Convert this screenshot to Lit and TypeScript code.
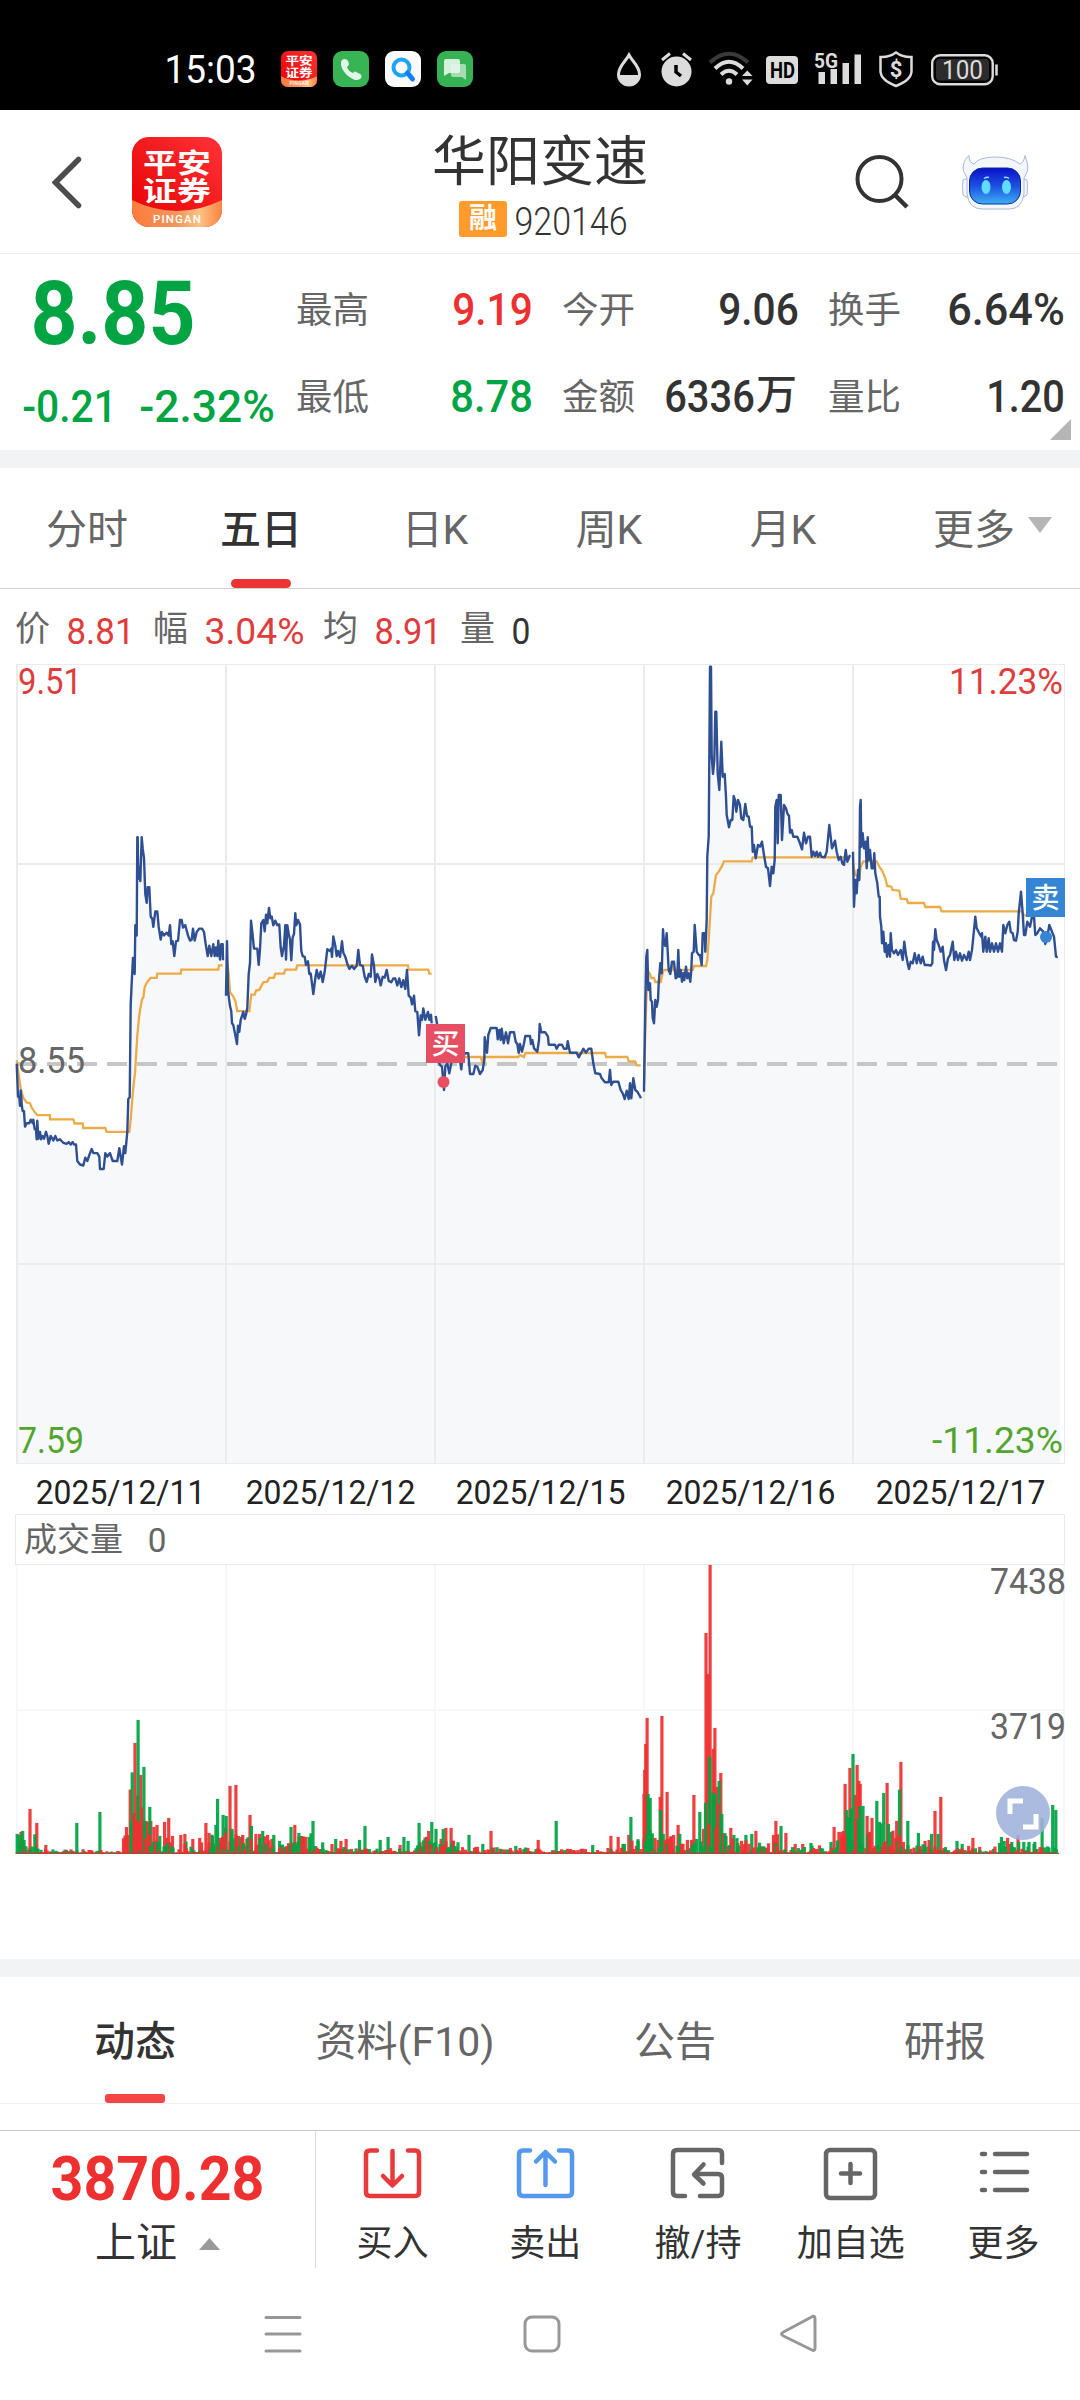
import { LitElement, html, svg, css } from 'lit';
import { customElement, property } from 'lit/decorators.js';
import { classMap } from 'lit/directives/class-map.js';

// Narrow DIN-like figures: the box is exactly cap-height tall, so its bottom is the baseline.
function din(text: string, width: number, cap: number, weight = 500) {
  const size = cap / 0.711;
  return html`<svg class="din" width=${width} height=${cap}>
    ${svg`<text x=${-0.04 * size} y=${cap} font-size=${size} font-weight=${weight}
      textLength=${width + 0.08 * size} lengthAdjust="spacingAndGlyphs">${text}</text>`}
  </svg>`;
}

function axisText(text: string, x: number, y: number, width: number, color: string) {
  return svg`<text x=${x - 1} y=${y} font-size="37.5" font-weight="450" fill=${color}
    textLength=${width + 2} lengthAdjust="spacingAndGlyphs">${text}</text>`;
}

const figures = css`
  .din {
    display: block;
    flex: none;
    overflow: visible;
    fill: currentColor;
    font-family: Roboto, 'Liberation Sans', sans-serif;
  }
`;

type Point = [number, number];

function parse(list: string): Point[] {
  return list.trim().split(/\s+/).map(p => p.split(',').map(Number) as Point);
}

interface Session {
  ox: number;
  oy: number;
  ky: number;
  price: string;
  avg: string;
}

const SESSIONS: Session[] = [
  {
    ox: 0, oy: 660, ky: 2.904,
    price: `50,1172 54,1268 58,1270 60,1295 62,1250 66,1298 68,1310 72,1310 75,1355 80,1345 88,1345 92,1335 98,1345
      100,1335 104,1362 108,1365 110,1392 112,1338 115,1390 120,1370 123,1392 127,1382 132,1390 138,1370 142,1382
      146,1405 152,1382 160,1395 166,1382 172,1395 180,1392 190,1402 200,1405 206,1400 212,1407 218,1400 222,1407
      228,1407 232,1455 240,1465 250,1468 256,1445 262,1455 270,1432 275,1420 280,1432 292,1432 298,1442 300,1478
      311,1478 316,1432 322,1442 330,1432 338,1455 352,1455 358,1418 366,1465 372,1412 376,1432 382,1370 385,1275
      389,1270 392,1000 396,920 399,865 404,912 406,770 410,800 412,515 413,515 415,635 419,600 421,642 425,515
      428,548 432,575 436,680 440,705 443,660 448,660 452,745 457,752 460,775 466,730 472,730 476,775 482,812
      486,790 492,800 500,792 506,800 510,770 514,825 518,817 523,860 528,817 534,815 540,755 545,755 549,777
      556,770 564,800 570,815 575,812 579,780 584,815 590,790 598,780 606,780 612,790 617,825 623,860 628,830
      634,860 640,825 644,860 648,835 652,860 655,815 660,870 664,825 668,825 669,872`,
    avg: `50,1162 54,1190 62,1245 70,1272 80,1285 90,1287 94,1298 102,1310 112,1322 150,1322 150,1334 220,1334
      224,1346 248,1346 250,1359 316,1359 320,1370 388,1370 392,1335 400,1240 405,1200 412,1090 418,1030 426,985
      430,980 434,950 442,935 452,923 470,923 472,911 542,911 544,899 655,899 657,887 668,887`
  },
  {
    ox: 0, oy: 660, ky: 2.904,
    price: `678,975 681,817 684,960 690,1005 694,1020 696,1055 700,1060 704,1080 711,1115 714,1062 718,1080 722,1045
      730,1022 734,1042 738,1030 742,1010 746,912 750,880 753,757 757,790 762,838 772,838 776,885 780,840 784,765
      790,755 794,788 798,740 802,765 807,720 811,750 815,745 820,770 826,757 832,770 838,768 842,835 846,860
      852,830 856,770 858,870 862,770 866,795 870,812 874,872 878,805 882,795 886,735 889,770 894,755 900,768
      904,845 908,860 914,862 918,885 924,875 928,912 932,910 936,940 940,970 946,925 950,900 956,925 962,905
      968,935 974,905 978,872 982,840 990,845 994,838 996,862 1000,803 1006,830 1010,860 1014,845 1020,862
      1026,817 1030,850 1036,862 1042,882 1048,897 1056,888 1062,897 1070,888 1075,842 1080,885 1088,888 1094,920
      1100,935 1106,912 1112,920 1116,855 1122,888 1126,935 1132,912 1138,925 1142,945 1148,920 1154,922 1160,900
      1166,932 1174,936 1180,925 1186,925 1192,945 1198,925 1204,950 1210,930 1216,955 1221,900 1226,975 1232,980
      1236,1000 1242,975 1246,1020 1252,1022 1257,1090 1262,1032 1266,1045 1270,1012 1276,1045 1284,1022 1288,1045
      1293,1030 1295,1055`,
    avg: `680,870 686,910 690,965 698,975 706,990 712,1020 748,1020 754,972 764,972 768,960 778,958 790,936 802,934
      808,923 822,923 826,911 852,911 856,899 888,899 892,887 1224,887 1226,899 1285,899 1288,911 1295,911`
  },
  {
    ox: 400, oy: 900, ky: 3,
    price: `107,348 112,375 114,480 120,495 126,500 132,570 136,500 142,490 148,520 154,490 160,470 170,470 178,470
      184,508 188,470 196,460 205,460 210,522 220,522 226,497 232,500 240,522 248,510 253,480 254,412 261,458
      265,405 272,384 290,384 293,418 298,390 302,420 305,386 311,430 318,397 324,430 330,397 342,397 347,425
      352,432 356,458 360,432 366,455 372,430 376,408 390,408 393,432 397,420 402,445 412,455 417,420 419,372
      424,397 436,397 444,410 446,434 465,434 470,446 476,434 486,434 492,446 500,446 503,424 510,458 530,458
      536,472 544,458 550,446 558,458 566,446 574,446 580,490 586,520 600,522 605,535 615,547 626,547 630,510
      634,555 640,545 655,545 662,570 668,580 674,597 680,572 686,597 690,550 694,595 700,535 706,570 712,575
      718,585 723,595`,
    avg: `117,475 205,471 242,471 246,484 250,471 355,471 360,465 372,471 376,459 615,459 618,471 682,471 686,484
      705,484 710,496 722,496`
  },
  {
    ox: 620, oy: 650, ky: 3,
    price: `72,1325 76,1060 79,920 82,900 85,1020 90,1000 92,1050 96,1055 98,1105 102,1120 106,1050 110,1070 114,1050
      116,1000 121,940 125,970 129,838 132,880 136,888 140,850 146,960 151,972 156,935 162,935 167,985 172,980
      175,900 178,980 182,960 186,995 190,970 193,990 198,950 202,985 206,970 211,995 214,960 216,910 221,905
      224,825 230,905 236,915 240,915 245,945 248,850 254,850 256,905 260,810 262,620 266,560 268,330 270,50
      273,50 275,320 279,372 283,330 286,185 289,185 293,370 298,420 301,350 304,275 308,380 314,372 318,440
      320,495 327,532 332,510 337,510 341,438 345,450 349,485 354,450 360,465 364,505 370,510 376,462 381,498
      386,500 390,530 395,530 398,605 402,585 407,625 414,585 420,590 426,575 432,615 438,650 444,655 450,708
      455,650 460,670 464,630 466,470 470,450 473,580 476,435 482,435 486,570 492,465 498,475 502,490 507,498
      510,548 515,540 520,560 532,560 540,580 546,598 552,548 558,580 564,560 570,560 575,620 580,605 585,618
      590,605 594,620 600,608 604,620 614,622 620,605 628,525 636,595 645,572 650,605 656,630 662,620 667,640
      672,645 677,600 682,635 690,615`,
    avg: `72,1300 76,1145 82,960 90,972 94,984 102,984 106,996 122,996 130,960 155,960 158,948 162,960 218,960
      222,948 258,948 262,930 268,840 274,740 280,730 288,675 296,665 305,650 312,634 395,634 398,622 690,622`
  },
  {
    ox: 620, oy: 650, ky: 3,
    price: `699,605 702,770 706,690 710,730 714,660 718,690 720,470 722,450 724,590 728,550 732,595 737,575 740,655
      743,562 746,630 750,600 755,655 760,655 763,610 766,670 772,700 776,740 779,740 780,800 784,830 786,880
      790,845 794,905 798,880 801,920 806,885 810,920 812,850 816,900 822,910 828,900 834,915 842,900 848,930
      853,875 858,915 864,945 867,957 872,935 878,940 884,910 890,940 896,915 902,940 908,920 914,945 924,945
      932,947 937,940 939,875 942,900 946,838 950,870 956,885 962,905 968,890 972,930 978,960 984,925 990,915
      998,875 1003,930 1008,905 1014,930 1020,910 1026,932 1032,915 1040,930 1046,905 1050,930 1056,900 1062,840
      1066,800 1070,835 1078,850 1084,860 1086,850 1090,905 1096,860 1100,905 1106,865 1110,905 1116,880 1122,905
      1128,880 1134,905 1140,880 1146,905 1150,825 1156,850 1162,825 1168,815 1172,845 1178,850 1182,870 1188,872
      1193,845 1196,790 1203,725 1208,790 1212,855 1216,855 1222,815 1230,830 1236,800 1242,800 1246,855 1252,850
      1260,835 1270,845 1276,882 1282,860 1288,825 1296,845 1302,860 1308,920 1313,922`,
    avg: `699,640 706,675 718,680 722,650 730,634 770,634 778,650 788,665 796,685 802,708 814,710 818,720 838,722
      842,746 860,747 864,759 912,759 916,771 960,771 965,784 1205,784 1212,796 1240,796`
  }
];

function plot(s: Session, list: string): string {
  return parse(list)
    .map(([x, y]) => `${(s.ox + x / 3).toFixed(1)},${(s.oy + y / s.ky).toFixed(1)}`)
    .join(' ');
}

const GRID_X = [17, 226, 435, 644, 853];

@customElement('price-chart')
export class PriceChart extends LitElement {
  static styles = css`
    :host {
      display: block;
      height: 801px;
    }
    svg {
      display: block;
      overflow: visible;
      font-family: Roboto, 'Noto Sans CJK SC', sans-serif;
    }
    .grid {
      stroke: #ebebeb;
      stroke-width: 2;
      fill: none;
    }
    .frame {
      stroke: #ebebeb;
      fill: none;
    }
    .area {
      fill: #f6f8fa;
    }
    .base {
      stroke: #c6c6c6;
      stroke-width: 4;
      stroke-dasharray: 20 10;
    }
    .avg {
      fill: none;
      stroke: #edab47;
      stroke-width: 2.3;
    }
    .price {
      fill: none;
      stroke: #2f4f93;
      stroke-width: 2.4;
      stroke-linejoin: round;
    }
    .mark {
      fill: #fff;
      font-size: 28px;
      font-weight: 500;
      text-anchor: middle;
    }
  `;

  render() {
    const line = SESSIONS.map(s => plot(s, s.price)).join(' ');
    return html`
      <svg width="1080" height="801" viewBox="0 664 1080 801">
        <polygon class="area" points="17,1464 ${line} 1060,957 1060,1464"></polygon>
        <rect class="frame" x="16.5" y="664.5" width="1048" height="799"></rect>
        ${GRID_X.map(x => svg`<line class="grid" x1=${x} x2=${x} y1="664" y2="1464"></line>`)}
        <path class="grid" d="M16 864h1048M16 1264h1048"></path>
        <line class="base" x1="17" x2="1058" y1="1064" y2="1064"></line>
        ${SESSIONS.map(s => svg`
          <polyline class="avg" points=${plot(s, s.avg)}></polyline>
          <polyline class="price" points=${plot(s, s.price)}></polyline>`)}
        ${axisText('9.51', 19, 694, 62, '#e03c3c')}
        ${axisText('8.55', 19, 1073, 65, '#666')}
        ${axisText('7.59', 19, 1453, 64, '#54a52f')}
        ${axisText('11.23%', 950, 694, 112, '#e03c3c')}
        ${axisText('-11.23%', 933, 1453, 129, '#54a52f')}
        <rect x="426" y="1024" width="39" height="39" fill="#e64e63"></rect>
        <text class="mark" x="445.5" y="1054">买</text>
        <circle cx="443.5" cy="1082" r="6" fill="#e64e63"></circle>
        <rect x="1026" y="878" width="39" height="39" fill="#3485d3"></rect>
        <text class="mark" x="1045.5" y="908">卖</text>
        <circle cx="1046" cy="937" r="6" fill="#3485d3"></circle>
      </svg>
    `;
  }
}

const SELL_LEFT = `50,1242 56,1245 66,1233 70,1260 223,1209 290,1176 101,1243 384,1057 401,900 418,1041 435,1161
  464,1248 540,1265 627,1215 632,1137 648,1185 657,1188 674,1227 730,1218 763,1233 795,1245 812,1263 845,1221
  868,1239 876,1248 880,1251 898,1251 903,1240 909,1203 937,1267 975,1257 1044,1260 1060,1218 1104,1260 1127,1251
  1173,1251 1185,1263 1217,1209 1254,1206 1266,1227 1287,1227 1314,1263 1330,1267 1362,1245 1402,1272 1498,1278`;
const BUY_LEFT = `61,1236 87,1167 107,1209 133,1275 378,1109 392,969 409,1065 400,1127 388,1180 424,1203 430,1206
  438,1203 447,1221 456,1215 478,1206 490,1194 484,1254 501,1248 525,1245 537,1242 560,1257 580,1254 598,1209
  607,1239 617,1248 638,1254 655,1224 668,1098 685,1095 692,1248 705,1245 717,1257 726,1185 743,1242 754,1242
  768,1249 777,1245 790,1257 856,1215 865,1266 888,1251 964,1272 990,1263 1005,1257 1162,1275 1220,1267 1235,1272
  1245,1233 1295,1224 1310,1224 1281,1257 1382,1281 1426,1233 1510,1284 1533,1284 1563,1260`;
const SELL_RIGHT = `47,1203 153,1275 241,1272 264,1191 285,1263 314,1122 320,1134 350,1170 326,1240 358,1242 406,1242
  464,1176 493,1011 520,1083 528,1182 516,1194 540,1248 563,1245 598,1245 615,1242 700,1218 787,1269 845,1266
  891,1170 909,1002 938,1158 978,1143 986,1206 991,1210 998,1119 1012,1212 1020,1236 1044,1109 1068,1203 1099,1239
  1137,1242 1156,1242 1211,1263 1226,1272 1340,1251 1348,1263 1370,1266 1390,1266 1405,1266 1420,1266 1437,1266
  1458,1194 1489,1155 1498,1170`;
const BUY_RIGHT = `206,1248 227,1251 258,1245 302,1122 304,1050 307,972 311,894 349,1131 354,888 369,1116 334,1254
  343,1260 380,1251 388,1245 401,1215 428,1260 440,1260 447,1125 475,1227 482,639 488,762 494,435 503,987 508,924
  514,1101 525,1059 554,1224 574,1269 627,1233 678,1245 685,1203 690,1243 714,1239 741,1272 763,1272 854,1221
  868,1236 876,1236 886,1092 900,1044 915,1125 921,1035 926,1083 930,1092 950,1188 957,1236 964,1194 1008,1089
  1036,1203 1048,1026 1033,1254 1118,1263 1130,1260 1147,1173 1164,1131 1245,1278 1257,1254 1277,1281 1358,1254
  1388,1245`;

// Upper bound of the quiet minutes' bars along the time axis.
const ENVELOPE = parse(`16,16 27,9 40,4 118,3 128,30 137,60 145,36 160,16 175,9 200,9 215,22 235,22 260,16 285,9
  300,18 313,16 320,6 400,5 425,16 445,16 470,6 600,4 625,10 640,16 648,28 655,14 660,20 672,20 685,8 700,16
  706,70 716,70 724,26 735,18 750,12 770,12 776,16 790,6 830,9 845,26 855,60 862,44 870,22 885,36 895,20 910,12
  950,6 990,4 1000,10 1010,10 1040,9 1058,4`);

function envelope(x: number): number {
  for (let i = 1; i < ENVELOPE.length; i++) {
    const [x1, h1] = ENVELOPE[i];
    if (x <= x1) {
      const [x0, h0] = ENVELOPE[i - 1];
      return h0 + ((h1 - h0) * (x - x0)) / (x1 - x0);
    }
  }
  return 3;
}

interface Bar {
  x: number;
  h: number;
  up: boolean;
}

function volumeBars(): Bar[] {
  const bars: Bar[] = [];
  const add = (list: string, ox: number, up: boolean) =>
    parse(list).forEach(([x, top]) => bars.push({ x: ox + x / 2.904, h: (1301 - top) / 3, up }));
  add(BUY_LEFT, 0, true);
  add(BUY_RIGHT, 540, true);
  add(SELL_LEFT, 0, false);
  add(SELL_RIGHT, 540, false);
  let seed = 7;
  for (let x = 17; x < 1058; x += 1.5) {
    seed = (seed * 16807) % 2147483647;
    const r = seed / 2147483647;
    seed = (seed * 16807) % 2147483647;
    bars.push({ x, h: 1 + envelope(x) * r * r, up: seed % 100 < 54 });
  }
  return bars;
}

@customElement('volume-chart')
export class VolumeChart extends LitElement {
  static styles = [figures, css`
    :host {
      display: block;
      position: relative;
      height: 445px;
    }
    .head {
      box-sizing: border-box;
      display: flex;
      align-items: center;
      gap: 26px;
      height: 51px;
      margin: 0 15px;
      padding-left: 8px;
      border: 1px solid #e9e9e9;
      color: #666;
      font-size: 33px;
      line-height: 1;
    }
    .plot {
      display: block;
      overflow: visible;
      font-family: Roboto, sans-serif;
    }
    .grid {
      stroke: #f7f7f7;
      stroke-width: 2;
      fill: none;
    }
    .up {
      fill: #ee3030;
    }
    .down {
      fill: #00a443;
    }
    .bar {
      opacity: 0.93;
    }
    .expand {
      position: absolute;
      left: 996px;
      top: 272px;
    }
  `];

  render() {
    return html`
      <div class="head"><span>成交量</span>${din('0', 16, 24, 400)}</div>
      <svg class="plot" width="1080" height="290" viewBox="0 1565 1080 290">
        ${[...GRID_X, 1064].map(x => svg`<line class="grid" x1=${x} x2=${x} y1="1565" y2="1853"></line>`)}
        <path class="grid" d="M16 1710h1048"></path>
        ${volumeBars().map(b => svg`<rect class="bar ${b.up ? 'up' : 'down'}" x=${(b.x - 1.6).toFixed(1)}
          y=${(1853.6 - b.h).toFixed(1)} width="3.2" height=${b.h.toFixed(1)}></rect>`)}
        <path d="M16 1853.4H1059" stroke="#c23b33" stroke-width="1"></path>
        ${axisText('7438', 991, 1594, 74, '#666')}
        ${axisText('3719', 991, 1739, 74, '#666')}
      </svg>
      <svg class="expand" width="54" height="54" viewBox="0 0 54 54">
        <circle cx="27" cy="27" r="27" fill="#9fb0db" opacity=".88"></circle>
        <path d="M14 28V15h13M40 28v13H27" fill="none" stroke="#fff" stroke-width="5"></path>
      </svg>
    `;
  }
}

@customElement('app-logo')
export class AppLogo extends LitElement {
  @property({ type: Number }) size = 90;

  static styles = css`
    :host {
      display: block;
      flex: none;
    }
    svg {
      display: block;
      font-family: 'Noto Sans CJK SC', sans-serif;
    }
  `;

  render() {
    return html`
      <svg width=${this.size} height=${this.size} viewBox="0 0 90 90">
        <defs>
          <clipPath id="tile"><rect width="90" height="90" rx="17"></rect></clipPath>
          <linearGradient id="red" x1="0" y1="1" x2="1" y2="0">
            <stop offset="0" stop-color="#e60000"></stop><stop offset="1" stop-color="#ff3237"></stop>
          </linearGradient>
          <linearGradient id="gold">
            <stop offset="0" stop-color="#ff7a3c"></stop><stop offset=".5" stop-color="#f0975c"></stop>
            <stop offset=".75" stop-color="#ffc184"></stop><stop offset="1" stop-color="#ff8440"></stop>
          </linearGradient>
        </defs>
        <g clip-path="url(#tile)">
          <rect width="90" height="90" fill="url(#red)"></rect>
          <path d="M0 63Q45 85 90 63V90H0z" fill="url(#gold)"></path>
        </g>
        <g fill="#fff" font-weight="700" text-anchor="middle">
          <text transform="translate(45 35.500) scale(1 .8)" font-size="34">平安</text>
          <text transform="translate(45 64) scale(1 .8)" font-size="34">证券</text>
          <text x="45" y="86" font-size="11.5" font-weight="500" textLength="48"
            font-family="Roboto">PINGAN</text>
        </g>
      </svg>
    `;
  }
}

@customElement('status-bar')
export class StatusBar extends LitElement {
  static styles = [figures, css`
    :host {
      box-sizing: border-box;
      display: flex;
      align-items: center;
      justify-content: space-between;
      height: 110px;
      padding: 28px 82px 0 166px;
      background: #000;
      color: #fff;
    }
    .apps, .state {
      display: flex;
      align-items: center;
    }
    .apps {
      gap: 16px;
    }
    .apps .din {
      margin-right: 10px;
    }
    .state {
      gap: 17px;
    }
    .state svg {
      display: block;
      overflow: visible;
      color: #dcdcdc;
    }
    svg {
      font-family: Roboto, sans-serif;
    }
  `];

  render() {
    return html`
      <div class="apps">
        ${din('15:03', 89, 27, 450)}
        <app-logo .size=${36}></app-logo>
        <svg width="36" height="36">
          <rect width="36" height="36" rx="9" fill="#37b555"></rect>
          <path d="M9 9c2-2 5-1 6 1l1 3c0 1-1 2-2 3 1 3 3 5 6 6 1-1 2-2 3-1l4 2c2 1 2 4 0 5-3 2-6 1-9-1-5-3-9-8-10-13
            0-2 0-4 1-5z" fill="#e2f5e6"></path>
        </svg>
        <svg width="36" height="36">
          <rect width="36" height="36" rx="9" fill="#fafafa"></rect>
          <circle cx="16.5" cy="16.5" r="8" fill="none" stroke="#1ea4f4" stroke-width="4"></circle>
          <path d="M22.5 22l5 6" stroke="#127ef0" stroke-width="5" stroke-linecap="round"></path>
        </svg>
        <svg width="36" height="36">
          <rect width="36" height="36" rx="9" fill="#35b253"></rect>
          <path d="M14 13h13q2 0 2 2v14l-4-3H16q-2 0-2-2z" fill="#a6dcb2"></path>
          <path d="M9 8h12q2 0 2 2v10q0 2-2 2H12l-5 3V10q0-2 2-2z" fill="#e4f5e8" opacity=".92"></path>
        </svg>
      </div>
      <div class="state">
        <svg width="27" height="36">
          <path d="M12 4C9 10 1.500 15 1.500 23.500a10.500 10.500 0 0 0 21 0C22.500 15 15 10 12 4z" fill="none"
            stroke="currentColor" stroke-width="3"></path>
          <path d="M2 24h20q-1 10-10 10T2 24z" fill="currentColor"></path>
        </svg>
        <svg width="31" height="36">
          <circle cx="15.500" cy="20.500" r="15" fill="currentColor"></circle>
          <path d="M1 9l8-6.500M30 9l-8-6.500" stroke="currentColor" stroke-width="3"></path>
          <path d="M15 14v7l5 4" fill="none" stroke="#000" stroke-width="3.500"></path>
        </svg>
        <svg width="40" height="36" fill="none" stroke-width="4">
          <path d="M1 11.500Q20-6 39 11.500" stroke="#3a3a3a"></path>
          <path d="M6 17.500Q20 4 34 17.500M12 23.500Q20 16 28 23.500" stroke="currentColor"></path>
          <circle cx="20" cy="30.500" r="3.200" fill="currentColor"></circle>
          <path d="M33 25h10.500l-5.200-5.500zM33 28.500h10.500l-5.200 6z" fill="currentColor"></path>
        </svg>
        <svg width="32" height="36">
          <rect y="5" width="32" height="28" rx="4" fill="currentColor"></rect>
          <text x="4" y="27" font-size="22.500" font-weight="700" fill="#000" textLength="25"
            lengthAdjust="spacingAndGlyphs">HD</text>
        </svg>
        <svg width="47" height="36" fill="currentColor">
          <text x="-1" y="16.500" font-size="21" font-weight="700" textLength="24"
            lengthAdjust="spacingAndGlyphs">5G</text>
          <path d="M3.500 21h6.500v12H3.500zM15.500 18H22v15h-6.500zM27.500 12H34v21h-6.500zM39.500 3.500H46V33h-6.500z"></path>
        </svg>
        <svg width="35" height="36">
          <path d="M17 1.500q7 5 15.500 4.500v14q0 9-15.500 15Q1.500 29 1.500 20V6Q10 6.500 17 1.500z" fill="none"
            stroke="currentColor" stroke-width="2.500"></path>
          <text x="17" y="25.500" font-size="22" font-weight="700" fill="currentColor" text-anchor="middle">$</text>
        </svg>
        <svg width="67" height="36">
          <rect x="1.200" y="4.200" width="60.500" height="29" rx="8" fill="none" stroke="currentColor"
            stroke-width="2.400"></rect>
          <rect x="5" y="8" width="53" height="21.500" rx="4" fill="#2c2c2c"></rect>
          <path d="M65.500 13.500v11" stroke="currentColor" stroke-width="2.500"></path>
          <text x="11" y="27.500" font-size="25.500" font-weight="400" fill="currentColor" textLength="41"
            lengthAdjust="spacingAndGlyphs">100</text>
        </svg>
      </div>
    `;
  }
}

@customElement('stock-header')
export class StockHeader extends LitElement {
  static styles = [figures, css`
    :host {
      box-sizing: border-box;
      display: grid;
      grid-template-columns: 52px 80px 300px 217px 1fr;
      height: 144px;
      border-bottom: 1px solid #ebebeb;
      color: #333;
    }
    .back {
      grid-column: 2;
      margin-top: 46px;
    }
    app-logo {
      margin-top: 27px;
    }
    .title {
      font-size: 54px;
      line-height: 54px;
      margin-top: 26px;
      white-space: nowrap;
    }
    .code {
      display: flex;
      align-items: center;
      gap: 9px;
      margin: 11px 0 0 27px;
    }
    .margin {
      width: 48px;
      height: 36px;
      border-radius: 3px;
      background: #ff9b2b;
      color: #fff;
      font-size: 28px;
      font-weight: 700;
      line-height: 36px;
      text-align: center;
    }
    .code .din {
      margin-top: 5px;
    }
    .tools {
      display: flex;
      gap: 53px;
      padding: 44px 0 0 206px;
    }
  `];

  render() {
    return html`
      <svg class="back" width="32" height="54">
        <path d="M26.500 3.500L3.500 26.500l23 23" fill="none" stroke="#4c4c4c" stroke-width="5.500" stroke-linecap="round"></path>
      </svg>
      <app-logo></app-logo>
      <div>
        <div class="title">华阳变速</div>
        <div class="code"><span class="margin">融</span>${din('920146', 110, 27, 350)}</div>
      </div>
      <div class="tools">
        <svg width="54" height="56">
          <circle cx="24.500" cy="25" r="22" fill="none" stroke="#333" stroke-width="4"></circle>
          <path d="M40 41l12 12" stroke="#333" stroke-width="4.500"></path>
        </svg>
        <svg width="68" height="56" viewBox="0 0 68 56">
          <defs>
            <linearGradient id="visor" x2="0" y2="1">
              <stop offset="0" stop-color="#0a10c8"></stop><stop offset=".5" stop-color="#1d50e0"></stop>
              <stop offset="1" stop-color="#3cb0f4"></stop>
            </linearGradient>
          </defs>
          <g fill="#f3f6fb" stroke="#a9bad2" stroke-width="1">
            <path d="M1 26q-1 6 0 15l5 3V24zM65 26q1 6 0 15l-5 3V24z"></path>
            <path d="M7 1.500C2 5-1 15 3 20q3 4 2 8v12q2 15 15 15h27q13 0 15-15V28q-1-4 2-8 4-5-1-18.500
              -1 7-5 8.500Q49 3 33 3T12 10Q7 9 7 1.500z"></path>
          </g>
          <rect x="7.500" y="14" width="51" height="36" rx="13" fill="url(#visor)" stroke="#0b2a9c"></rect>
          <ellipse cx="24" cy="33" rx="4.500" ry="7" fill="#5fdcff"></ellipse>
          <ellipse cx="44.500" cy="33" rx="4.500" ry="7" fill="#5fdcff"></ellipse>
          <path d="M22 24.500q3-2 5-1M42 23.500q3-1 5 1" fill="none" stroke="#9fd8ff" stroke-width="1.500"></path>
        </svg>
      </div>
    `;
  }
}

interface Quote {
  label: string;
  value: string;
  width: number;
  tone?: string;
  unit?: string;
}

const QUOTES: Quote[] = [
  { label: '最高', value: '9.19', width: 77, tone: 'red' },
  { label: '今开', value: '9.06', width: 77 },
  { label: '换手', value: '6.64%', width: 114 },
  { label: '最低', value: '8.78', width: 79, tone: 'green' },
  { label: '金额', value: '6336', width: 87, unit: '万' },
  { label: '量比', value: '1.20', width: 75 }
];

@customElement('quote-panel')
export class QuotePanel extends LitElement {
  static styles = [figures, css`
    :host {
      box-sizing: border-box;
      display: flex;
      position: relative;
      height: 196px;
    }
    .red {
      color: #ee3030;
    }
    .green {
      color: #00a443;
    }
    .last {
      box-sizing: border-box;
      width: 296px;
      padding: 27px 0 0 24px;
    }
    .last > .din {
      margin-left: 10px;
    }
    .change {
      display: flex;
      gap: 26px;
      margin-top: 46px;
    }
    .items {
      display: grid;
      grid-template-columns: repeat(3, 235px);
      grid-auto-rows: 87px;
      column-gap: 31px;
      padding-top: 11px;
    }
    .item {
      display: flex;
      align-items: center;
      justify-content: space-between;
      color: #333;
    }
    .label {
      padding-top: 5px;
      color: #666;
      font-size: 36.500px;
      line-height: 1;
    }
    .value {
      display: flex;
      align-items: center;
      gap: 3px;
    }
    .value.red, .value.green {
      color: #ee3030;
    }
    .value.green {
      color: #00a443;
    }
    .unit {
      font-size: 41px;
      font-weight: 500;
      line-height: 1;
    }
    .corner {
      position: absolute;
      right: 9px;
      bottom: 10px;
    }
  `];

  render() {
    return html`
      <div class="last green">
        ${din('8.85', 158, 63, 700)}
        <div class="change">${din('-0.21', 91, 32)}${din('-2.32%', 132, 32)}</div>
      </div>
      <div class="items">
        ${QUOTES.map(q => html`
          <div class="item">
            <span class="label">${q.label}</span>
            <span class="value ${q.tone ?? ''}">
              ${din(q.value, q.width, 32)}${q.unit ? html`<span class="unit">${q.unit}</span>` : ''}
            </span>
          </div>
        `)}
      </div>
      <svg class="corner" width="21" height="21"><path d="M21 0v21H0z" fill="#b5b5b5"></path></svg>
    `;
  }
}

const PERIODS = ['分时', '五日', '日K', '周K', '月K'];
const DATES = ['2025/12/11', '2025/12/12', '2025/12/15', '2025/12/16', '2025/12/17'];
const SECTIONS = ['动态', '资料(F10)', '公告', '研报'];

const ACTIONS = [
  {
    label: '买入', color: '#e83a3a',
    icon: svg`<path d="M16 5.500H9q-4 0-4 4V47q0 4 4 4h45q4 0 4-4V9.500q0-4-4-4h-7M31.500 6v34M22 31l9.500 9.500L41 31"></path>`
  },
  {
    label: '卖出', color: '#5499ee',
    icon: svg`<path d="M16 5.500H9q-4 0-4 4V47q0 4 4 4h45q4 0 4-4V9.500q0-4-4-4h-9M31.500 40V7M22 16.500L31.500 7l9.500 9.500"></path>`
  },
  {
    label: '撤/持', color: '#666',
    icon: svg`<path d="M19 51H11q-4 0-4-4V9q0-4 4-4h41q4 0 4 4v9M34 51h18q4 0 4-4V33q0-4-4-4H29M37.500 19.500L28 29.500l9.500 9"></path>`
  },
  {
    label: '加自选', color: '#666',
    icon: svg`<rect x="7" y="5" width="49" height="48" rx="4"></rect><path d="M31.500 19v19M22 28.500h19"></path>`
  },
  {
    label: '更多', color: '#666',
    icon: svg`<path d="M10 9h3M10 27h3M10 45h3M23 9h32M23 27h32M23 45h32"></path>`
  }
];

@customElement('app-root')
export class AppRoot extends LitElement {
  static styles = [figures, css`
    :host {
      display: flex;
      flex-direction: column;
      width: 1080px;
      height: 2400px;
      overflow: hidden;
      background: #fff;
      color: #333;
      font-family: Roboto, 'Noto Sans CJK SC', sans-serif;
    }
    .band {
      height: 18px;
      flex: none;
      background: #f2f3f5;
    }
    .tabs {
      box-sizing: border-box;
      flex: none;
      display: flex;
      color: #666;
      font-size: 41px;
      line-height: 1;
    }
    .tab {
      display: flex;
      flex-direction: column;
      align-items: center;
      justify-content: space-between;
    }
    .tab.active {
      color: #333;
      font-weight: 500;
    }
    .tab.active::after {
      content: '';
      width: 60px;
      height: 9px;
      border-radius: 5px;
      background: #eb3434;
    }
    .periods {
      height: 121px;
      border-bottom: 1px solid #d2d2d2;
    }
    .periods .tab {
      width: 174px;
      padding-top: 42px;
    }
    .more {
      display: flex;
      gap: 13px;
      padding: 42px 0 0 63px;
    }
    .more svg {
      margin-top: 7px;
    }
    .cursor {
      flex: none;
      display: flex;
      align-items: center;
      height: 75px;
      padding: 5px 15px 0;
      box-sizing: border-box;
      color: #666;
      font-size: 35px;
      line-height: 1;
    }
    .cursor span {
      margin-right: 18px;
    }
    .cursor .din {
      color: #e03c3c;
      margin: 3px 20px 0 0;
    }
    .cursor .din:last-child {
      color: #333;
    }
    .dates {
      flex: none;
      display: flex;
      gap: 43px;
      height: 34px;
      padding: 15px 0 0 37px;
      color: #222;
    }
    .sections {
      height: 127px;
      margin-bottom: 26px;
      border-bottom: 1px solid #f0f0f0;
    }
    .sections .tab {
      width: 270px;
      padding-top: 45px;
    }
    .sections .tab.active::after {
      border-radius: 3px;
      background: #f54545;
    }
    .toolbar {
      box-sizing: border-box;
      flex: none;
      display: flex;
      height: 138px;
      border-top: 1px solid #c9c9c9;
    }
    .index {
      box-sizing: border-box;
      display: flex;
      flex-direction: column;
      align-items: center;
      width: 316px;
      padding-top: 26px;
      border-right: 1px solid #dcdcdc;
      font-size: 41px;
      line-height: 1;
    }
    .index > .din {
      color: #ee3030;
      margin-bottom: 23px;
    }
    .name {
      display: flex;
      align-items: center;
      gap: 22px;
    }
    .action {
      flex: 1;
      display: flex;
      flex-direction: column;
      align-items: center;
      gap: 25px;
      padding-top: 14px;
      font-size: 36px;
      line-height: 1;
    }
    .action svg {
      display: block;
      fill: none;
      stroke: currentColor;
      stroke-width: 4.500;
      stroke-linecap: round;
      stroke-linejoin: round;
    }
    .nav {
      flex: 1;
      display: flex;
      justify-content: space-between;
      padding: 45px 259px 0 262px;
    }
    .nav svg {
      fill: none;
      stroke: #979797;
      stroke-width: 3;
      stroke-linecap: round;
      stroke-linejoin: round;
    }
  `];

  render() {
    return html`
      <status-bar></status-bar>
      <stock-header></stock-header>
      <quote-panel></quote-panel>
      <div class="band"></div>

      <div class="tabs periods">
        ${PERIODS.map((p, i) => html`<div class=${classMap({ tab: true, active: i === 1 })}>${p}</div>`)}
        <div class="more">更多<svg width="24" height="16"><path d="M0 0h24L12 16z" fill="#b5b5b5"></path></svg></div>
      </div>

      <div class="cursor">
        <span>价</span>${din('8.81', 65, 26, 450)}
        <span>幅</span>${din('3.04%', 97, 26, 450)}
        <span>均</span>${din('8.91', 64, 26, 450)}
        <span>量</span>${din('0', 16, 26, 450)}
      </div>
      <price-chart></price-chart>
      <div class="dates">${DATES.map(d => din(d, 167, 24, 450))}</div>
      <volume-chart></volume-chart>
      <div class="band"></div>

      <div class="tabs sections">
        ${SECTIONS.map((s, i) => html`<div class=${classMap({ tab: true, active: i === 0 })}>${s}</div>`)}
      </div>

      <div class="toolbar">
        <div class="index">
          ${din('3870.28', 209, 43, 700)}
          <div class="name">
            上证<svg width="21" height="12"><path d="M0 12h21L10.500 0z" fill="#999"></path></svg>
          </div>
        </div>
        ${ACTIONS.map(a => html`
          <div class="action">
            <svg width="63" height="56" style="color:${a.color}">${a.icon}</svg>
            <span>${a.label}</span>
          </div>
        `)}
      </div>

      <div class="nav">
        <svg width="42" height="42"><path d="M4 4.500h34M4 21h34M4 38h34"></path></svg>
        <svg width="42" height="42"><rect x="4" y="4" width="34" height="34" rx="7"></rect></svg>
        <svg width="42" height="42"><path d="M33.500 3.500Q36 2.500 36 6v29q0 3.500-3 2L4.500 23q-4-2 0-4z"></path></svg>
      </div>
    `;
  }
}
